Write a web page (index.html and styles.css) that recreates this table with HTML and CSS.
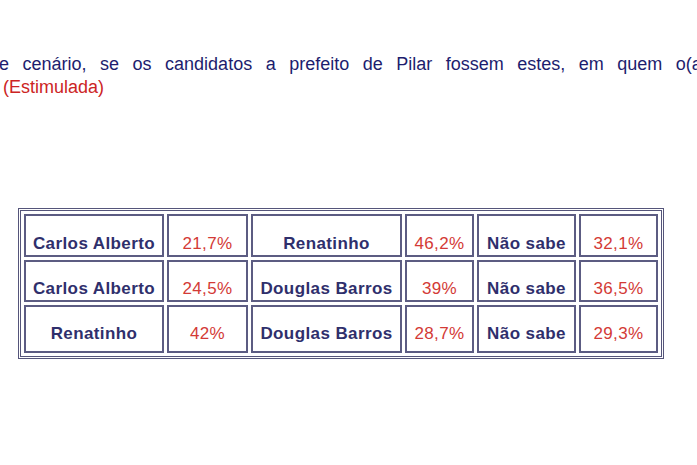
FILE: index.html
```html
<!DOCTYPE html>
<html lang="pt-BR">
<head>
<meta charset="utf-8">
<title>Pesquisa Pilar</title>
<link rel="stylesheet" href="styles.css">
</head>
<body>
<div class="page">
  <div class="question">
    <p class="q-line">e cenário, se os candidatos a prefeito de Pilar fossem estes, em quem o(a) sr(a) votaria?</p>
    <p class="q-tag">(Estimulada)</p>
  </div>
  <table class="results">
    <tr class="r1">
      <td class="name c1">Carlos Alberto</td>
      <td class="pct c2">21,7%</td>
      <td class="name c3">Renatinho</td>
      <td class="pct c4">46,2%</td>
      <td class="name c5">Não sabe</td>
      <td class="pct c6">32,1%</td>
    </tr>
    <tr class="r2">
      <td class="name">Carlos Alberto</td>
      <td class="pct">24,5%</td>
      <td class="name">Douglas Barros</td>
      <td class="pct">39%</td>
      <td class="name">Não sabe</td>
      <td class="pct">36,5%</td>
    </tr>
    <tr class="r3">
      <td class="name">Renatinho</td>
      <td class="pct">42%</td>
      <td class="name">Douglas Barros</td>
      <td class="pct">28,7%</td>
      <td class="name">Não sabe</td>
      <td class="pct">29,3%</td>
    </tr>
  </table>
</div>
</body>
</html>
```
FILE: styles.css
```css
html, body {
  margin: 0;
  padding: 0;
  background: #ffffff;
}
.page {
  width: 697px;
  height: 465px;
  overflow: hidden;
  font-family: "Liberation Sans", Arial, sans-serif;
}
.question {
  padding-top: 53px;
  overflow: hidden;
  width: 697px;
}
.q-line {
  margin: 0 0 0 -1px;
  white-space: nowrap;
  font-size: 18px;
  line-height: 23px;
  word-spacing: 8.5px;
  color: #1d1d6e;
}
.q-tag {
  margin: 0 0 0 3px;
  font-size: 18px;
  line-height: 23px;
  color: #cc2424;
}
.results {
  margin: 109px 0 0 18px;
  border: 3px double #55557a;
  border-spacing: 3px;
  border-collapse: separate;
}
.results td {
  border: 2px solid #5c5c82;
  text-align: center;
  vertical-align: top;
  font-size: 17px;
  line-height: 18px;
  letter-spacing: 0.4px;
  padding: 18px 0 2px 0;
}
.results .r1 td { padding-top: 19px; padding-bottom: 2px; }
.results .r3 td { padding-bottom: 8px; }
.name {
  font-weight: bold;
  color: #2f2f6c;
}
.pct {
  color: #d33a36;
}
.c1 { width: 136px; }
.c2 { width: 77px; }
.c3 { width: 147px; }
.c4 { width: 65px; }
.c5 { width: 95px; }
.c6 { width: 75px; }
```
